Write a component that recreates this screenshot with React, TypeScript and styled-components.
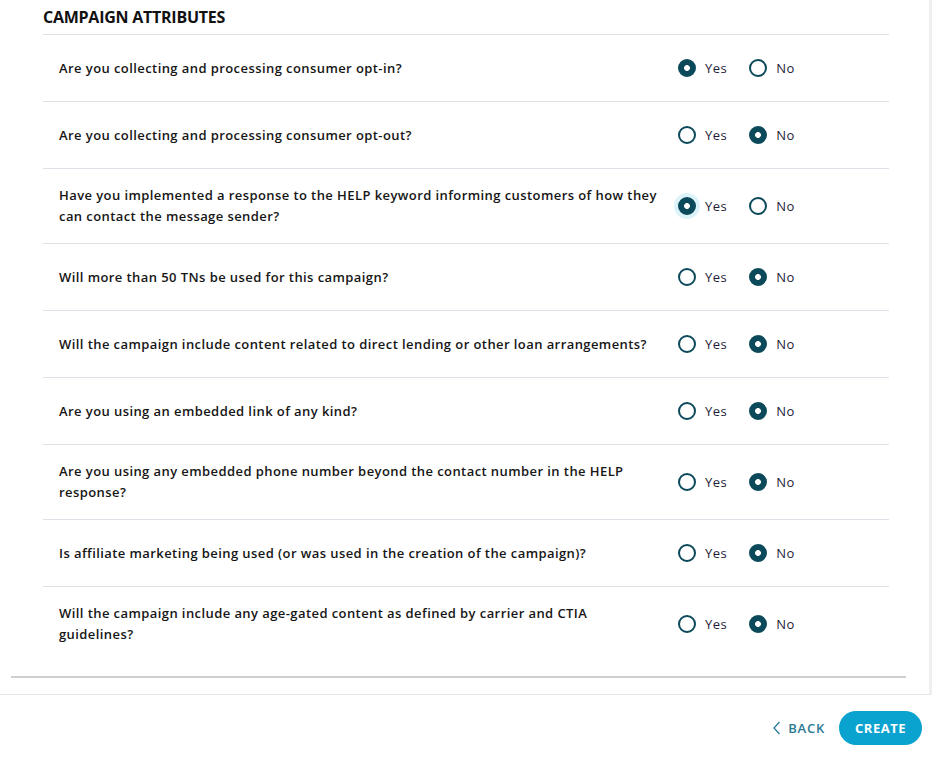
import React from 'react';
import styled, { createGlobalStyle } from 'styled-components';

const GlobalStyle = createGlobalStyle`
	body {
		margin: 0;
		background: #ffffff;
		font-family: 'Open Sans', 'Liberation Sans', sans-serif;
		color: #1b1b1b;
	}
`;

type Answer = 'yes' | 'no';

interface Question {
	text: string;
	answer: Answer;
	focused?: boolean;
}

const questions: Question[] = [
	{ text: 'Are you collecting and processing consumer opt-in?', answer: 'yes' },
	{ text: 'Are you collecting and processing consumer opt-out?', answer: 'no' },
	{
		text: 'Have you implemented a response to the HELP keyword informing customers of how they can contact the message sender?',
		answer: 'yes',
		focused: true,
	},
	{ text: 'Will more than 50 TNs be used for this campaign?', answer: 'no' },
	{
		text: 'Will the campaign include content related to direct lending or other loan arrangements?',
		answer: 'no',
	},
	{ text: 'Are you using an embedded link of any kind?', answer: 'no' },
	{
		text: 'Are you using any embedded phone number beyond the contact number in the HELP response?',
		answer: 'no',
	},
	{
		text: 'Is affiliate marketing being used (or was used in the creation of the campaign)?',
		answer: 'no',
	},
	{
		text: 'Will the campaign include any age-gated content as defined by carrier and CTIA guidelines?',
		answer: 'no',
	},
];

function RadioOption({ label, checked, focused }: { label: string; checked: boolean; focused?: boolean }) {
	return (
		<Option>
			<Halo focused={focused ? 'true' : 'false'}>
				<Circle checked={checked ? 'true' : 'false'} />
			</Halo>
			<OptionLabel>{label}</OptionLabel>
		</Option>
	);
}

export default function App() {
	return (
		<>
			<GlobalStyle />
			<Page>
				<Card>
					<Section>
						<Title>Campaign Attributes</Title>
						<List>
							{questions.map((q, i) => (
								<Row key={i}>
									<QuestionText>{q.text}</QuestionText>
									<Options>
										<RadioOption label="Yes" checked={q.answer === 'yes'} focused={q.focused} />
										<RadioOption label="No" checked={q.answer === 'no'} />
									</Options>
								</Row>
							))}
						</List>
					</Section>
					<Separator />
				</Card>
				<Footer>
					<BackButton>
						<svg width="10" height="14" viewBox="0 0 10 14" fill="none">
							<path d="M7.5 1 L2 7 L7.5 13" stroke="#2b7a95" strokeWidth="1.3" />
						</svg>
						Back
					</BackButton>
					<CreateButton>Create</CreateButton>
				</Footer>
			</Page>
		</>
	);
}

const Page = styled.div`
	width: 932px;
	min-height: 757px;
	background: #ffffff;
`;

const Card = styled.div`
	width: 929px;
	border-right: 3px solid #efefef;
	border-bottom: 1px solid #e3e3e3;
	padding-bottom: 16px;
`;

const Section = styled.div`
	padding: 0 40px 0 43px;
`;

const Title = styled.h2`
	margin: 0;
	padding-top: 6px;
	height: 28px;
	font-size: 16px;
	font-weight: 700;
	text-transform: uppercase;
	letter-spacing: -0.25px;
	color: #111;
	border-bottom: 1px solid #e1e0e8;
`;

const List = styled.div`
	display: flex;
	flex-direction: column;
	padding-bottom: 15px;
`;

const Row = styled.div`
	display: grid;
	grid-template-columns: 1fr 213px;
	column-gap: 17px;
	align-items: center;
	min-height: 34px;
	padding: 16px 0 16px 16px;
	border-bottom: 1px solid #e1e0e8;

	&:last-child {
		border-bottom: none;
	}
`;

const QuestionText = styled.div`
	font-size: 13px;
	font-weight: 600;
	line-height: 21px;
	letter-spacing: 0.42px;
	color: #161616;
`;

const Options = styled.div`
	display: flex;
	align-items: center;
	gap: 20px;
`;

const Option = styled.label`
	display: flex;
	align-items: center;
	gap: 5px;
	cursor: pointer;
`;

const Halo = styled.span<{ focused: string }>`
	display: flex;
	align-items: center;
	justify-content: center;
	width: 26px;
	height: 26px;
	margin-left: -2px;
	border-radius: 50%;
	background: ${({ focused }) => (focused === 'true' ? '#dcf3fa' : 'transparent')};
`;

const Circle = styled.span<{ checked: string }>`
	box-sizing: border-box;
	width: 18px;
	height: 18px;
	border-radius: 50%;
	border: 2px solid #0c4a5b;
	background: ${({ checked }) =>
		checked === 'true' ? 'radial-gradient(circle, #ffffff 0 2.6px, #0c4a5b 3.2px)' : '#ffffff'};
`;

const OptionLabel = styled.span`
	font-size: 13px;
	font-weight: 400;
	letter-spacing: 0.5px;
	color: #1d1d3a;
`;

const Separator = styled.div`
	height: 2px;
	margin: 0 23px 0 11px;
	background: #cfcfcf;
`;

const Footer = styled.div`
	display: flex;
	justify-content: flex-end;
	align-items: center;
	gap: 14px;
	padding: 16px 10px 0 0;
`;

const BackButton = styled.button`
	display: flex;
	align-items: center;
	gap: 6px;
	background: none;
	border: none;
	padding: 0;
	font-family: 'Open Sans', 'Liberation Sans', sans-serif;
	font-size: 13px;
	font-weight: 600;
	letter-spacing: 0.8px;
	text-transform: uppercase;
	color: #2b7a95;
	cursor: pointer;
`;

const CreateButton = styled.button`
	height: 34px;
	padding: 0 16px;
	border: none;
	border-radius: 17px;
	background: #0aa2cf;
	font-family: 'Open Sans', 'Liberation Sans', sans-serif;
	font-size: 13px;
	font-weight: 700;
	letter-spacing: 0.5px;
	text-transform: uppercase;
	color: #ffffff;
	cursor: pointer;
`;
